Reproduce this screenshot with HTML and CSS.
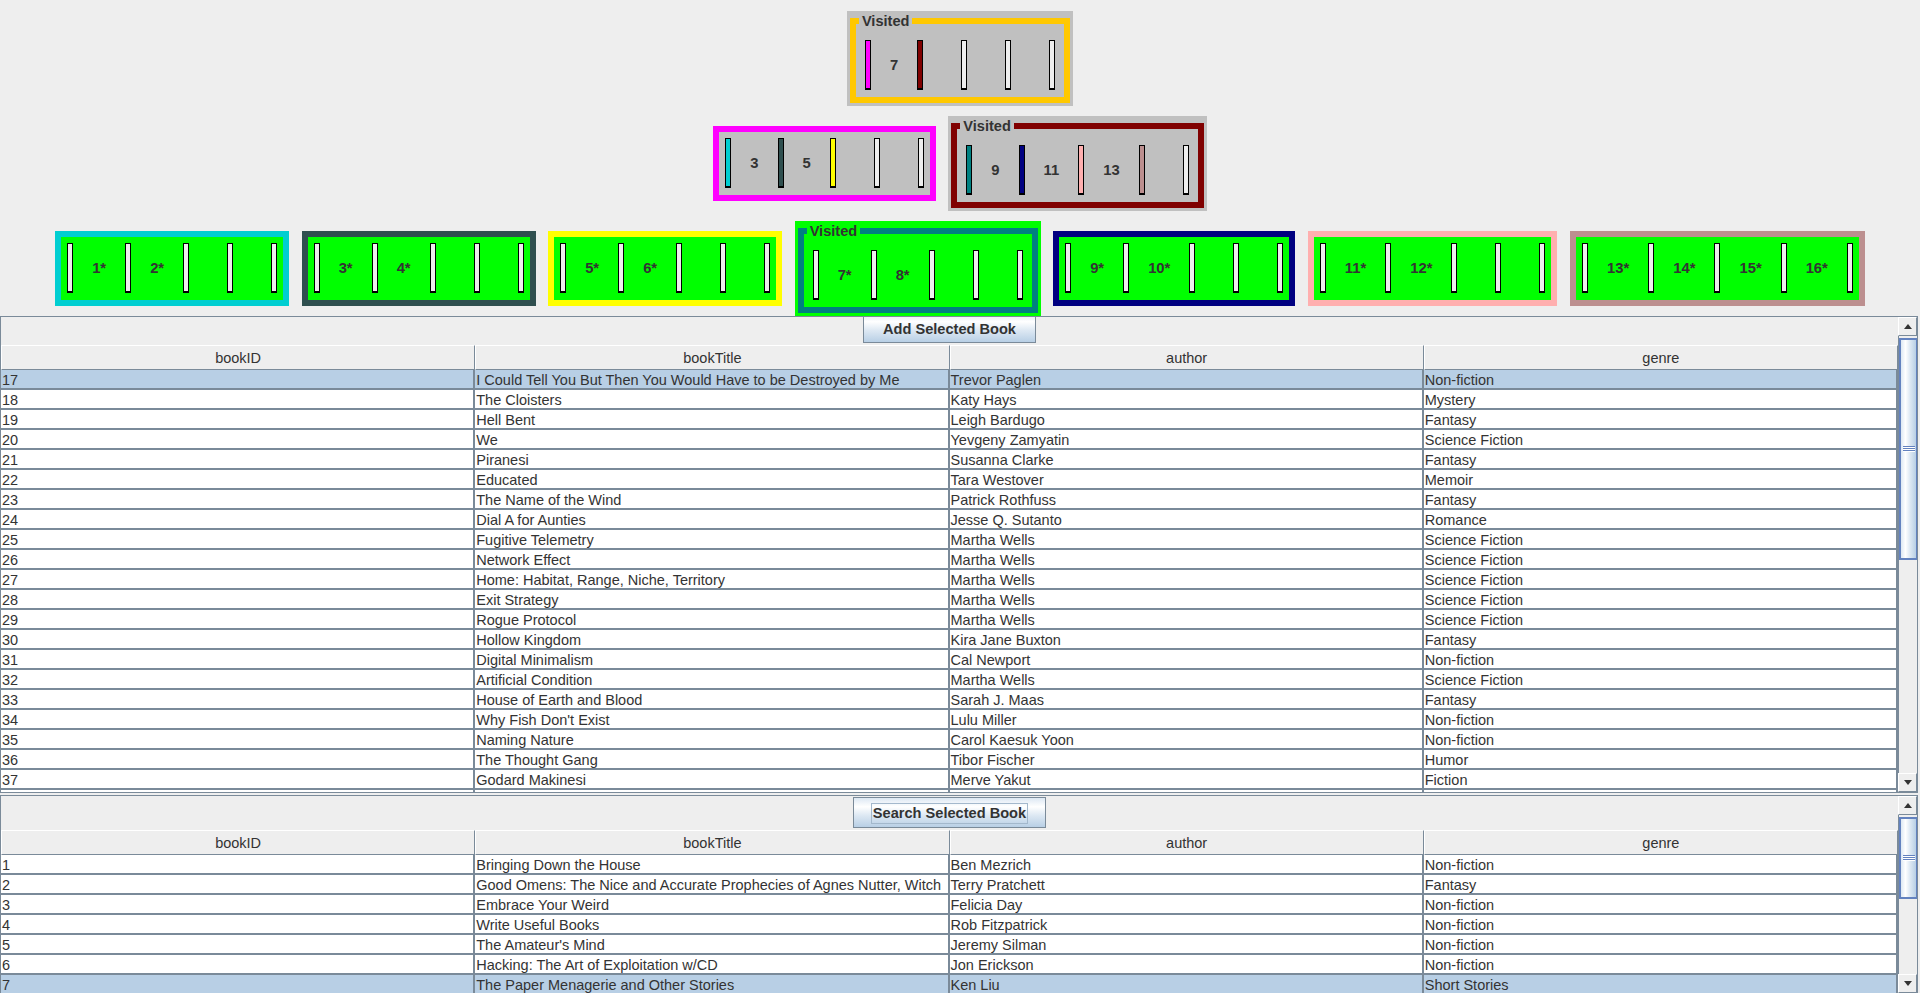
FILE: index.html
```html
<!DOCTYPE html>
<html>
<head>
<meta charset="utf-8">
<title>B-Tree Books</title>
<link rel="stylesheet" href="styles.css">
</head>
<body>
<div class="app">
  <div class="tree">
    <div class="level">
      <div class="row">
        <div class="vnode gray">
          <div class="vbox gray b-orange">
            <span class="title">Visited</span>
            <span class="bar f-magenta"></span><span class="lbl">7</span><span class="bar f-maroon"></span><span class="lbl"></span><span class="bar"></span><span class="lbl"></span><span class="bar"></span><span class="lbl"></span><span class="bar"></span>
          </div>
        </div>
      </div>
    </div>
    <div class="level">
      <div class="row">
        <div class="node gray b-magenta">
          <span class="bar f-cyan"></span><span class="lbl">3</span><span class="bar f-slate"></span><span class="lbl">5</span><span class="bar f-yellow"></span><span class="lbl"></span><span class="bar"></span><span class="lbl"></span><span class="bar"></span>
        </div>
        <div class="vnode gray">
          <div class="vbox gray b-maroon">
            <span class="title">Visited</span>
            <span class="bar f-teal"></span><span class="lbl">9</span><span class="bar f-navy"></span><span class="lbl">11</span><span class="bar f-pink"></span><span class="lbl">13</span><span class="bar f-rosy"></span><span class="lbl"></span><span class="bar"></span>
          </div>
        </div>
      </div>
    </div>
    <div class="level">
      <div class="row">
        <div class="node green b-cyan">
          <span class="bar"></span><span class="lbl">1*</span><span class="bar"></span><span class="lbl">2*</span><span class="bar"></span><span class="lbl"></span><span class="bar"></span><span class="lbl"></span><span class="bar"></span>
        </div>
        <div class="node green b-slate">
          <span class="bar"></span><span class="lbl">3*</span><span class="bar"></span><span class="lbl">4*</span><span class="bar"></span><span class="lbl"></span><span class="bar"></span><span class="lbl"></span><span class="bar"></span>
        </div>
        <div class="node green b-yellow">
          <span class="bar"></span><span class="lbl">5*</span><span class="bar"></span><span class="lbl">6*</span><span class="bar"></span><span class="lbl"></span><span class="bar"></span><span class="lbl"></span><span class="bar"></span>
        </div>
        <div class="vnode green">
          <div class="vbox green b-teal">
            <span class="title">Visited</span>
            <span class="bar"></span><span class="lbl">7*</span><span class="bar"></span><span class="lbl">8*</span><span class="bar"></span><span class="lbl"></span><span class="bar"></span><span class="lbl"></span><span class="bar"></span>
          </div>
        </div>
        <div class="node green b-navy">
          <span class="bar"></span><span class="lbl">9*</span><span class="bar"></span><span class="lbl">10*</span><span class="bar"></span><span class="lbl"></span><span class="bar"></span><span class="lbl"></span><span class="bar"></span>
        </div>
        <div class="node green b-pink">
          <span class="bar"></span><span class="lbl">11*</span><span class="bar"></span><span class="lbl">12*</span><span class="bar"></span><span class="lbl"></span><span class="bar"></span><span class="lbl"></span><span class="bar"></span>
        </div>
        <div class="node green b-rosy">
          <span class="bar"></span><span class="lbl">13*</span><span class="bar"></span><span class="lbl">14*</span><span class="bar"></span><span class="lbl">15*</span><span class="bar"></span><span class="lbl">16*</span><span class="bar"></span>
        </div>
      </div>
    </div>
  </div>

  <div class="pane pane1">
    <div class="viewport">
      <div class="view scrolled">
        <div class="btnbar"><button class="btn">Add Selected Book</button></div>
        <div class="thead"><div class="th">bookID</div><div class="th">bookTitle</div><div class="th">author</div><div class="th">genre</div></div>
        <div class="tr sel"><div class="td">17</div><div class="td">I Could Tell You But Then You Would Have to be Destroyed by Me</div><div class="td">Trevor Paglen</div><div class="td">Non-fiction</div></div>
        <div class="tr"><div class="td">18</div><div class="td">The Cloisters</div><div class="td">Katy Hays</div><div class="td">Mystery</div></div>
        <div class="tr"><div class="td">19</div><div class="td">Hell Bent</div><div class="td">Leigh Bardugo</div><div class="td">Fantasy</div></div>
        <div class="tr"><div class="td">20</div><div class="td">We</div><div class="td">Yevgeny Zamyatin</div><div class="td">Science Fiction</div></div>
        <div class="tr"><div class="td">21</div><div class="td">Piranesi</div><div class="td">Susanna Clarke</div><div class="td">Fantasy</div></div>
        <div class="tr"><div class="td">22</div><div class="td">Educated</div><div class="td">Tara Westover</div><div class="td">Memoir</div></div>
        <div class="tr"><div class="td">23</div><div class="td">The Name of the Wind</div><div class="td">Patrick Rothfuss</div><div class="td">Fantasy</div></div>
        <div class="tr"><div class="td">24</div><div class="td">Dial A for Aunties</div><div class="td">Jesse Q. Sutanto</div><div class="td">Romance</div></div>
        <div class="tr"><div class="td">25</div><div class="td">Fugitive Telemetry</div><div class="td">Martha Wells</div><div class="td">Science Fiction</div></div>
        <div class="tr"><div class="td">26</div><div class="td">Network Effect</div><div class="td">Martha Wells</div><div class="td">Science Fiction</div></div>
        <div class="tr"><div class="td">27</div><div class="td">Home: Habitat, Range, Niche, Territory</div><div class="td">Martha Wells</div><div class="td">Science Fiction</div></div>
        <div class="tr"><div class="td">28</div><div class="td">Exit Strategy</div><div class="td">Martha Wells</div><div class="td">Science Fiction</div></div>
        <div class="tr"><div class="td">29</div><div class="td">Rogue Protocol</div><div class="td">Martha Wells</div><div class="td">Science Fiction</div></div>
        <div class="tr"><div class="td">30</div><div class="td">Hollow Kingdom</div><div class="td">Kira Jane Buxton</div><div class="td">Fantasy</div></div>
        <div class="tr"><div class="td">31</div><div class="td">Digital Minimalism</div><div class="td">Cal Newport</div><div class="td">Non-fiction</div></div>
        <div class="tr"><div class="td">32</div><div class="td">Artificial Condition</div><div class="td">Martha Wells</div><div class="td">Science Fiction</div></div>
        <div class="tr"><div class="td">33</div><div class="td">House of Earth and Blood</div><div class="td">Sarah J. Maas</div><div class="td">Fantasy</div></div>
        <div class="tr"><div class="td">34</div><div class="td">Why Fish Don't Exist</div><div class="td">Lulu Miller</div><div class="td">Non-fiction</div></div>
        <div class="tr"><div class="td">35</div><div class="td">Naming Nature</div><div class="td">Carol Kaesuk Yoon</div><div class="td">Non-fiction</div></div>
        <div class="tr"><div class="td">36</div><div class="td">The Thought Gang</div><div class="td">Tibor Fischer</div><div class="td">Humor</div></div>
        <div class="tr"><div class="td">37</div><div class="td">Godard Makinesi</div><div class="td">Merve Yakut</div><div class="td">Fiction</div></div>
        <div class="tr"><div class="td"></div><div class="td"></div><div class="td"></div><div class="td"></div></div>
      </div>
    </div>
    <div class="vsb">
      <div class="arrow"><span class="tri-up"></span></div>
      <div class="track"><div class="thumb t1"><span class="grip"></span></div></div>
      <div class="arrow"><span class="tri-down"></span></div>
    </div>
  </div>

  <div class="pane pane2">
    <div class="viewport">
      <div class="view">
        <div class="btnbar"><button class="btn"><span class="focus">Search Selected Book</span></button></div>
        <div class="thead"><div class="th">bookID</div><div class="th">bookTitle</div><div class="th">author</div><div class="th">genre</div></div>
        <div class="tr"><div class="td">1</div><div class="td">Bringing Down the House</div><div class="td">Ben Mezrich</div><div class="td">Non-fiction</div></div>
        <div class="tr"><div class="td">2</div><div class="td">Good Omens: The Nice and Accurate Prophecies of Agnes Nutter, Witch</div><div class="td">Terry Pratchett</div><div class="td">Fantasy</div></div>
        <div class="tr"><div class="td">3</div><div class="td">Embrace Your Weird</div><div class="td">Felicia Day</div><div class="td">Non-fiction</div></div>
        <div class="tr"><div class="td">4</div><div class="td">Write Useful Books</div><div class="td">Rob Fitzpatrick</div><div class="td">Non-fiction</div></div>
        <div class="tr"><div class="td">5</div><div class="td">The Amateur's Mind</div><div class="td">Jeremy Silman</div><div class="td">Non-fiction</div></div>
        <div class="tr"><div class="td">6</div><div class="td">Hacking: The Art of Exploitation w/CD</div><div class="td">Jon Erickson</div><div class="td">Non-fiction</div></div>
        <div class="tr sel"><div class="td">7</div><div class="td">The Paper Menagerie and Other Stories</div><div class="td">Ken Liu</div><div class="td">Short Stories</div></div>
      </div>
    </div>
    <div class="vsb">
      <div class="arrow"><span class="tri-up"></span></div>
      <div class="track"><div class="thumb t2"><span class="grip"></span></div></div>
      <div class="arrow"><span class="tri-down"></span></div>
    </div>
  </div>
</div>
</body>
</html>
```

FILE: styles.css
```css
* { box-sizing: border-box; }
html, body { margin: 0; padding: 0; }
body {
  width: 1920px;
  height: 993px;
  overflow: hidden;
  background: #EEEEEE;
  font-family: "Liberation Sans", Arial, sans-serif;
  color: #333333;
}
.app { display: flex; flex-direction: column; width: 1920px; }

/* ---------- tree ---------- */
.tree { height: 316px; display: flex; flex-direction: column; }
.level { height: 105px; padding-top: 11px; flex: none; }
.level:last-child { height: 106px; }
.row {
  height: 95px;
  display: flex;
  justify-content: center;
  align-items: center;
  gap: 12.5px;
}
.node {
  display: flex;
  align-items: center;
  gap: 19px;
  border: 6px solid #000;
  padding: 6px 6px 7px 6px;
}
.vnode { padding: 7px 3px 3px 3px; }
.vbox {
  position: relative;
  display: flex;
  align-items: center;
  gap: 19px;
  border: 6px solid #000;
  padding: 16px 9px 7px 9px;
}
.title {
  position: absolute;
  top: -11px;
  left: 3px;
  padding: 0 3px;
  line-height: 16px;
  font-size: 14.6px;
  font-weight: bold;
  color: #333333;
  background: inherit;
}
.gray { background: #C0C0C0; }
.green { background: #00FF00; }

.bar {
  flex: none;
  width: 6px;
  height: 50px;
  border: 1px solid #000;
  border-bottom-width: 2px;
  background: #EEEEEE;
}
.lbl {
  flex: none;
  font-size: 14.8px;
  font-weight: bold;
  color: #333333;
  line-height: 17px;
}

.b-orange { border-color: #FFC800; }
.b-magenta { border-color: #FF00FF; }
.b-maroon { border-color: #800000; }
.b-cyan { border-color: #00CED1; }
.b-slate { border-color: #2F4F4F; }
.b-yellow { border-color: #FFFF00; }
.b-teal { border-color: #008080; }
.b-navy { border-color: #000080; }
.b-pink { border-color: #FFAFAF; }
.b-rosy { border-color: #BC8F8F; }

.f-magenta { background: #FF00FF; }
.f-maroon { background: #800000; }
.f-cyan { background: #00CED1; }
.f-slate { background: #2F4F4F; }
.f-yellow { background: #FFFF00; }
.f-teal { background: #008080; }
.f-navy { background: #000080; }
.f-pink { background: #FFAFAF; }
.f-rosy { background: #BC8F8F; }

/* ---------- scroll panes ---------- */
.pane {
  width: 1918px;
  border: 1px solid #7A8A99;
  display: flex;
  flex: none;
}
.pane1 { height: 477px; margin-bottom: 2px; }
.pane2 { height: 199px; }
.viewport { flex: 1; overflow: hidden; background: #EEEEEE; }
.view.scrolled { margin-top: -6px; }

.btnbar {
  height: 34px;
  padding-top: 1px;
  display: flex;
  justify-content: center;
  align-items: flex-start;
}
.btn {
  height: 31px;
  padding: 2px 19px 0 19px;
  border: 1px solid #7A8A99;
  border-radius: 0;
  font-family: "Liberation Sans", Arial, sans-serif;
  font-size: 14.6px;
  font-weight: bold;
  color: #333333;
  background: linear-gradient(to bottom, #DDE8F3 0%, #FFFFFF 30%, #DDE8F3 60%, #B8CFE5 100%);
  display: flex;
  align-items: center;
}
.focus {
  display: inline-block;
  line-height: 17px;
  outline: 1px solid #A3B8CC;
  outline-offset: 1px;
}

.thead, .tr {
  display: grid;
  grid-template-columns: repeat(4, 1fr);
}
.th {
  height: 25px;
  padding-top: 2px;
  line-height: 21px;
  text-align: center;
  font-size: 14.5px;
  background: #EEEEEE;
  border-top: 1px solid #FFFFFF;
  border-left: 1px solid #FFFFFF;
  border-right: 1px solid #7A8A99;
  border-bottom: 1px solid #7A8A99;
  white-space: nowrap;
  overflow-x: clip;
  overflow-y: visible;
}
.tr { background: #FFFFFF; }
.tr.sel { background: #B8CFE5; }
.td {
  height: 20px;
  padding-top: 2px;
  line-height: 17px;
  padding-left: 1px;
  font-size: 14.5px;
  border-right: 2px solid #7A8A99;
  border-bottom: 2px solid #7A8A99;
  white-space: nowrap;
  overflow-x: clip;
  overflow-y: visible;
}

/* ---------- scrollbar ---------- */
.vsb {
  width: 19px;
  flex: none;
  display: flex;
  flex-direction: column;
  background: #EEEEEE;
}
.arrow {
  height: 19px;
  flex: none;
  background: #EEEEEE;
  border: 1px solid #7A8A99;
  border-top-color: #FFFFFF;
  border-left-color: #FFFFFF;
  display: flex;
  align-items: center;
  justify-content: center;
}
.tri-up {
  width: 0; height: 0;
  border-left: 4px solid transparent;
  border-right: 4px solid transparent;
  border-bottom: 5px solid #333333;
}
.tri-down {
  width: 0; height: 0;
  border-left: 4px solid transparent;
  border-right: 4px solid transparent;
  border-top: 5px solid #333333;
}
.track {
  flex: 1;
  padding-top: 2px;
  background: #EEEEEE;
  border-left: 1px solid #7A8A99;
}
.thumb {
  border: 2px solid #6382BF;
  border-right-width: 1px;
  background: linear-gradient(to right, #DDE8F3 0%, #FFFFFF 30%, #DDE8F3 60%, #B8CFE5 100%);
  display: flex;
  align-items: center;
  justify-content: center;
}
.t1 { height: 222px; }
.t2 { height: 82px; }
.grip {
  width: 12px;
  height: 6px;
  background: repeating-linear-gradient(to bottom, #6382BF 0 1px, #FFFFFF 1px 2px);
}
```
